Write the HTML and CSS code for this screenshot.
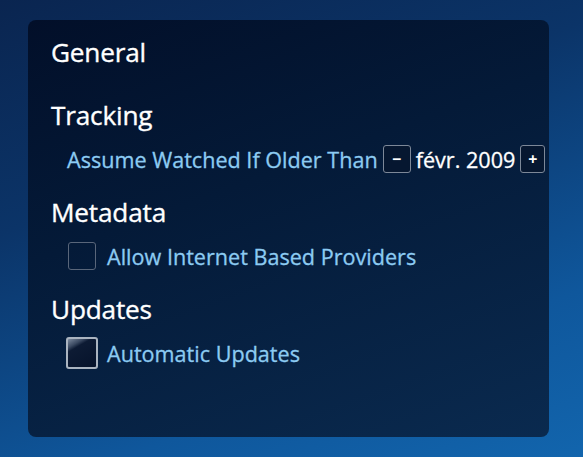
FILE: index.html
```html
<!DOCTYPE html>
<html lang="fr">
<head>
    <meta charset="UTF-8">
    <meta name="viewport" content="width=device-width, initial-scale=1.0">
    <title>Settings</title>
    <link rel="stylesheet" href="styles.css">
</head>
<body>
    <div class="panel">
        <h2 class="section">General</h2>

        <h2 class="section">Tracking</h2>
        <div class="row">
            <span class="label">Assume Watched If Older Than</span>
            <button class="step minus" type="button">&minus;</button>
            <span class="value">févr. 2009</span>
            <button class="step plus" type="button">+</button>
        </div>

        <h2 class="section">Metadata</h2>
        <label class="row check">
            <span class="box"></span>
            <span class="label">Allow Internet Based Providers</span>
        </label>

        <h2 class="section">Updates</h2>
        <label class="row check">
            <span class="box focused"></span>
            <span class="label">Automatic Updates</span>
        </label>
    </div>
</body>
</html>
```

FILE: styles.css
```css
html, body {
    height: 100%;
}

body {
    margin: 0;
    padding: 20px 0 0 28px;
    box-sizing: border-box;
    font-family: "Open Sans", "Noto Sans", sans-serif;
    background: linear-gradient(160deg, #0a2550 0%, #0b3468 35%, #0f579c 75%, #1265ad 100%);
}

.panel {
    width: 521px;
    height: 417px;
    box-sizing: border-box;
    padding: 16px 0 0 23px;
    border-radius: 8px;
    background: linear-gradient(160deg, #020f29 0%, #041a38 40%, #0a2a4f 100%);
}

.section {
    margin: 0;
    color: #fff;
    font-size: 26.2px;
    font-weight: 400;
    line-height: 32px;
    letter-spacing: -0.2px;
    -webkit-text-stroke: 0.35px #fff;
}

.section + .section {
    margin-top: 31px;
}

.row {
    display: flex;
    align-items: center;
    height: 30px;
    margin: 13px 0 22px 16px;
    white-space: nowrap;
}

.row > * {
    flex-shrink: 0;
}

.label {
    color: #8ccbf2;
    font-size: 21.6px;
    -webkit-text-stroke: 0.3px #8ccbf2;
}

.value {
    color: #fff;
    font-size: 21.6px;
    -webkit-text-stroke: 0.3px #fff;
    margin: 0 5px;
}

.step {
    height: 28px;
    padding: 0;
    border: 1px solid #7d8898;
    border-radius: 3px;
    background: #061730;
    color: #fff;
    font-family: inherit;
    font-size: 16px;
    font-weight: bold;
}

.minus {
    width: 28px;
    margin-left: 5px;
}

.plus {
    width: 25px;
}

.check {
    margin-left: 17px;
}

.box {
    width: 26px;
    height: 26px;
    margin-right: 11px;
    border: 1px solid #59667a;
    border-radius: 3px;
}

.box.focused {
    width: 28px;
    height: 28px;
    margin-left: -2px;
    margin-right: 9px;
    border: 2px solid #aab4c0;
    background: linear-gradient(150deg, #7c8a9e 0%, #3b4a62 20%, #0d1b34 30%, #06132b 100%);
}
```
